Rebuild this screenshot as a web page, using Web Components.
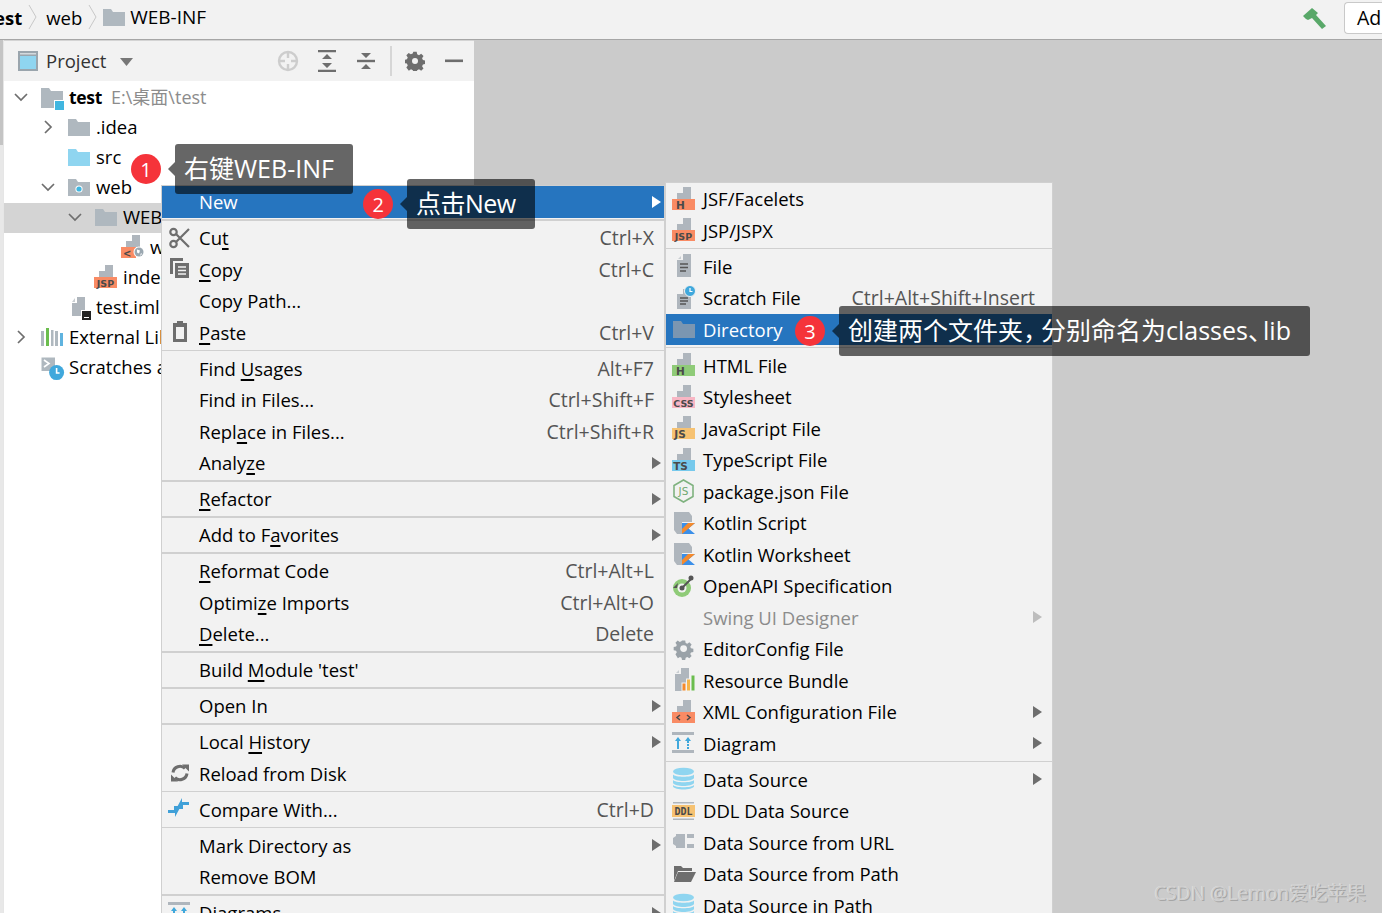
<!DOCTYPE html>
<html>
<head>
<meta charset="utf-8">
<style>
  html, body { margin: 0; height: 100%; overflow: hidden; background: #cbcbcb; }
  body { font-family: "Open Sans", "Noto Sans CJK SC", sans-serif; font-size: 18.5px; color: #000; }
</style>
</head>
<body>
<ide-window>
  <ide-breadcrumbs slot="top"></ide-breadcrumbs>
  <project-panel slot="left">
    <tree-row level="0" arrow="down" icon="root"><b>test</b><span class="path">E:\桌面\test</span></tree-row>
    <tree-row level="1" arrow="right" icon="folder">.idea</tree-row>
    <tree-row level="1" icon="src">src</tree-row>
    <tree-row level="1" arrow="down" icon="web">web</tree-row>
    <tree-row level="2" arrow="down" icon="folder" selected>WEB-INF</tree-row>
    <tree-row level="3" icon="webxml">web.xml</tree-row>
    <tree-row level="2" icon="jsp">index.jsp</tree-row>
    <tree-row level="1" icon="iml">test.iml</tree-row>
    <tree-row level="0" arrow="right" icon="libs">External Libraries</tree-row>
    <tree-row level="0" icon="scratches">Scratches and Consoles</tree-row>
  </project-panel>
</ide-window>

<context-menu style="left:161px;top:185px;width:504px" end="3">
  <menu-row selected arrow>New</menu-row>
  <menu-sep thick></menu-sep>
  <menu-row icon="cut" shortcut="Ctrl+X">Cu<u>t</u></menu-row>
  <menu-row icon="copy" shortcut="Ctrl+C"><u>C</u>opy</menu-row>
  <menu-row>Copy Path...</menu-row>
  <menu-row icon="paste" shortcut="Ctrl+V"><u>P</u>aste</menu-row>
  <menu-sep></menu-sep>
  <menu-row shortcut="Alt+F7">Find <u>U</u>sages</menu-row>
  <menu-row shortcut="Ctrl+Shift+F">Find in Files...</menu-row>
  <menu-row shortcut="Ctrl+Shift+R">Repl<u>a</u>ce in Files...</menu-row>
  <menu-row arrow>Analy<u>z</u>e</menu-row>
  <menu-sep thick></menu-sep>
  <menu-row arrow><u>R</u>efactor</menu-row>
  <menu-sep thick></menu-sep>
  <menu-row arrow>Add to F<u>a</u>vorites</menu-row>
  <menu-sep thick></menu-sep>
  <menu-row shortcut="Ctrl+Alt+L"><u>R</u>eformat Code</menu-row>
  <menu-row shortcut="Ctrl+Alt+O">Optimi<u>z</u>e Imports</menu-row>
  <menu-row shortcut="Delete"><u>D</u>elete...</menu-row>
  <menu-sep thick></menu-sep>
  <menu-row>Build <u>M</u>odule 'test'</menu-row>
  <menu-sep thick></menu-sep>
  <menu-row arrow>Open In</menu-row>
  <menu-sep thick></menu-sep>
  <menu-row arrow>Local <u>H</u>istory</menu-row>
  <menu-row icon="reload">Reload from Disk</menu-row>
  <menu-sep></menu-sep>
  <menu-row icon="compare" shortcut="Ctrl+D">Compare With...</menu-row>
  <menu-sep></menu-sep>
  <menu-row arrow>Mark Directory as</menu-row>
  <menu-row>Remove BOM</menu-row>
  <menu-sep thick></menu-sep>
  <menu-row icon="diagram" arrow>Diagrams</menu-row>
</context-menu>

<context-menu style="left:665px;top:182px;width:388px" end="10">
  <menu-row icon="jsf">JSF/Facelets</menu-row>
  <menu-row icon="jsp">JSP/JSPX</menu-row>
  <menu-sep></menu-sep>
  <menu-row icon="file">File</menu-row>
  <menu-row icon="scratch" shortcut="Ctrl+Alt+Shift+Insert">Scratch File</menu-row>
  <menu-row icon="dirsel" selected>Directory</menu-row>
  <menu-sep></menu-sep>
  <menu-row icon="html">HTML File</menu-row>
  <menu-row icon="css">Stylesheet</menu-row>
  <menu-row icon="js">JavaScript File</menu-row>
  <menu-row icon="ts">TypeScript File</menu-row>
  <menu-row icon="node">package.json File</menu-row>
  <menu-row icon="kotlin">Kotlin Script</menu-row>
  <menu-row icon="kotlin">Kotlin Worksheet</menu-row>
  <menu-row icon="openapi">OpenAPI Specification</menu-row>
  <menu-row disabled arrow>Swing UI Designer</menu-row>
  <menu-row icon="gear">EditorConfig File</menu-row>
  <menu-row icon="bundle">Resource Bundle</menu-row>
  <menu-row icon="xml" arrow>XML Configuration File</menu-row>
  <menu-row icon="diagram" arrow>Diagram</menu-row>
  <menu-sep></menu-sep>
  <menu-row icon="db" arrow>Data Source</menu-row>
  <menu-row icon="ddl">DDL Data Source</menu-row>
  <menu-row icon="plug">Data Source from URL</menu-row>
  <menu-row icon="open">Data Source from Path</menu-row>
  <menu-row icon="db">Data Source in Path</menu-row>
</context-menu>

<step-callout num="1" style="left:131px;top:144px">右键WEB-INF</step-callout>
<step-callout num="2" style="left:363px;top:179px;letter-spacing:-.5px">点击New</step-callout>
<step-callout num="3" style="left:795px;top:306px">创建两个文件夹<span class="comma">，</span>分别命名为classes<span class="dun">、</span>lib</step-callout>

<water-mark>CSDN @Lemon爱吃苹果</water-mark>

<script>
// small svg helpers, everything drawn on a 24x24 box
const page = '<path d="M11 0H19V12H5V6H11Z" fill="#afb6bd"/>';
const badge = (color, label, size) => page +
  `<rect x="0" y="12" width="23" height="11" fill="${color}"/>` +
  `<text x="${label.length > 1 ? 11.5 : 4}" y="21.5" text-anchor="${label.length > 1 ? 'middle' : 'start'}" font-family="DejaVu Sans" font-weight="700" font-size="${size || 10.5}" fill="#4a4a4a">${label}</text>`;
const folder = (color, extra) =>
  `<path d="M1 4H9L11 7H23V21H1Z" fill="${color}"/>` + (extra || '');
const gearPath = '<path fill="#9aa2a8" d="M10 2h4l.6 3 2 .9 2.6-1.700 2.800 2.800-1.700 2.600.9 2 3 .6v4l-3 .6-.9 2 1.700 2.600-2.800 2.800-2.600-1.700-2 .9-.6 3h-4l-.6-3-2-.9-2.600 1.700L1.800 19.200l1.700-2.600-.9-2-3-.6v-4l3-.6.9-2L1.800 4.800 4.600 2l2.600 1.700 2-.9Z" transform="translate(2 2) scale(.8)"/><circle cx="11.600" cy="11.600" r="3.400" fill="#f2f2f2"/>';

const ICONS = {
  root: '<path d="M1 3H9L11 6H23V23H1Z" fill="#afb8bf"/><rect x="14" y="15" width="10" height="10" fill="#fff"/><rect x="15" y="16" width="9" height="9" fill="#40b6e0"/>',
  folder: folder('#afb8bf'),
  src: folder('#8fd5f0'),
  web: folder('#afb8bf', '<circle cx="12" cy="14" r="3.600" fill="#fff"/><circle cx="12" cy="14" r="2.600" fill="#40b6e0"/>'),
  dirsel: folder('#7b96b1'),
  webxml: page + '<rect x="0" y="12" width="15" height="11" fill="#f98b64"/><text x="2" y="21.500" font-family="DejaVu Sans" font-weight="700" font-size="10" fill="#4a4a4a">&lt;</text><circle cx="18" cy="17" r="5.500" fill="#fff"/><circle cx="18" cy="17" r="4.500" fill="#9aa7b0"/><path d="M16 14.500l3 1-1 3-2-1ZM20 18l1 1-2 2Z" fill="#fff"/>',
  jsp: badge('#f98b64', 'JSP', 9.500),
  jsf: badge('#f98b64', 'H'),
  html: badge('#8fcb78', 'H'),
  css: badge('#f8b6c4', 'CSS', 9.500),
  js: badge('#f6c272', 'JS', 10.500).replace('x="11.5"', 'x="8"'),
  ts: badge('#76c9ec', 'TS', 10.500).replace('x="11.5"', 'x="8.500"'),
  xml: page + '<rect x="0" y="12" width="23" height="11" fill="#f98b64"/><path d="M8 15l-3 2.500L8 20M15 15l3 2.500L15 20" fill="none" stroke="#4a4a4a" stroke-width="1.500"/>',
  iml: '<path d="M10 2H18V21H5V8H10Z" fill="#afb6bd"/><path d="M8 3V7H5Z" fill="#c9ced2"/><rect x="14" y="15" width="10" height="10" fill="#fff"/><rect x="15" y="16" width="9" height="9" fill="#222"/><rect x="17" y="22" width="5" height="1" fill="#fff"/>',
  libs: '<path d="M1 6h3v15H1ZM15 6h3v15h-3Z" fill="#afb8bf"/><rect x="6" y="3" width="3" height="18" fill="#6bbd4e"/><rect x="11" y="5" width="2.500" height="16" fill="#afb8bf"/><rect x="20" y="8" width="3" height="13" fill="#5fb3df"/>',
  scratches: '<path d="M1.500 2.500H15V16H1.500Z" fill="#afb8bf"/><path d="M4 5l5 3.500-5 3.500" fill="none" stroke="#fff" stroke-width="1.600"/><circle cx="16.600" cy="17.600" r="7.500" fill="#40a8dc"/><path d="M16.600 13v5h3" fill="none" stroke="#fff" stroke-width="1.600"/>',
  cut: '<g fill="none" stroke="#6e6e6e" stroke-width="2.200"><circle cx="5.500" cy="6" r="3.200"/><circle cx="5.500" cy="18" r="3.200"/><path d="M8 8 21 21M8 16 21 3"/></g>',
  copy: '<path d="M2 1H15V4H5V17H2Z" fill="#6e6e6e"/><path d="M7 6H21V21H7Z" fill="#6e6e6e"/><path d="M10 10H18M10 13.500H18M10 17H18" stroke="#f2f2f2" stroke-width="1.300"/>',
  paste: '<path d="M9 1h6v2h4v19H5V3h4Z" fill="#6e6e6e"/><rect x="8" y="7" width="8" height="12" fill="#f2f2f2"/>',
  reload: '<g fill="none" stroke="#6e6e6e" stroke-width="3"><path d="M5 11.500A7 7 0 0 1 17 7.500"/><path d="M19 12.500A7 7 0 0 1 7 16.500"/></g><path d="M14 3.500h7v7ZM10 20.500H3v-7Z" fill="#6e6e6e"/>',
  compare: '<g fill="#40a0d8"><path d="M0 13H6V9L13 9 7 20V16H0Z"/><path d="M21 8H15V12L8 12 14 1V5H21Z"/></g>',
  file: '<path d="M11 0H19V23H5V6H11Z" fill="#afb6bd"/><path d="M9 2V5H6Z" fill="#c9ced2"/><path d="M8 10H16M8 13.500H16M8 17H14" stroke="#555" stroke-width="1.500"/>',
  scratch: '<path d="M11 3H19V23H5V8H11Z" fill="#afb6bd"/><path d="M8 12H16M8 15H16M8 18H14" stroke="#555" stroke-width="1.500"/><circle cx="18" cy="5" r="5.500" fill="#40a8dc" stroke="#f2f2f2"/><path d="M18 2v3.500h2.500" fill="none" stroke="#fff" stroke-width="1.200"/>',
  node: '<path d="M11.500 1 21 6.500v11L11.500 23 2 17.500v-11Z" fill="none" stroke="#7fb27f" stroke-width="1.600"/><text x="11.500" y="16" text-anchor="middle" font-family="DejaVu Sans" font-size="10.500" fill="#6fa86f">JS</text>',
  kotlin: '<path d="M2 1H17L20 5V11H10V23H5L2 19Z" fill="#afb6bd"/><path d="M10 23V12H23L16.500 17.500 23 23Z" fill="#3b8fe8"/><path d="M10 18 16 12H23L10 23Z" fill="#f58a2c"/>',
  openapi: '<circle cx="10" cy="14" r="9" fill="#8fcb78"/><circle cx="10" cy="14" r="4.500" fill="#f2f2f2"/><path d="M10 14 19 5" stroke="#555" stroke-width="2"/><circle cx="10" cy="14" r="2.500" fill="#555"/><circle cx="19" cy="4" r="2.500" fill="#555"/><path d="M1 14l5-5-1 5Z" fill="#555"/>',
  gear: gearPath,
  bundle: '<path d="M9 0H17V23H3V6H9Z" fill="#afb6bd"/><path d="M7 2V5H4Z" fill="#c9ced2"/><rect x="10" y="15" width="4" height="8" fill="#f58a2c" stroke="#f2f2f2"/><rect x="14.500" y="11" width="4" height="12" fill="#f6b54a" stroke="#f2f2f2"/><rect x="19" y="7" width="4" height="16" fill="#6bbd4e" stroke="#f2f2f2"/>',
  diagram: '<rect x="0" y="1" width="22" height="3" fill="#afb6bd"/><rect x="0" y="19" width="22" height="3" fill="#afb6bd"/><g fill="#40a8dc"><path d="M6 6l3 4H7v8H5v-8H3Z"/><path d="M16 6l3 4h-2v2h-2v-2h-2ZM15 13h2v2h-2ZM15 16h2v2h-2Z"/></g>',
  db: '<g fill="#8fd5f0"><ellipse cx="11.500" cy="4.500" rx="10.500" ry="3.800"/><path d="M1 7.500c2 3 19 3 21 0v3.500c-2 4-19 4-21 0Z"/><path d="M1 13c2 3 19 3 21 0v3c-2 4-19 4-21 0Z"/><path d="M1 18c2 3 19 3 21 0v1.500c-2 4-19 4-21 0Z"/></g>',
  ddl: '<rect x="1" y="3" width="21" height="1.500" fill="#afb6bd"/><rect x="1" y="19.500" width="21" height="1.500" fill="#afb6bd"/><rect x="0" y="6" width="23" height="12" fill="#f6c272"/><text x="11.500" y="16" text-anchor="middle" font-family="DejaVu Sans Mono" font-weight="700" font-size="10" fill="#4a4a4a">DDL</text>',
  plug: '<path d="M1 8 4 6V4H13V18H4V16L1 14Z" fill="#afb6bd"/><rect x="15" y="4" width="7" height="4" fill="#afb6bd"/><rect x="15" y="14" width="7" height="4" fill="#afb6bd"/>',
  open: '<path d="M2 4H9L11 6H20V9H6L2 19Z" fill="#6e6e6e"/><path d="M6 10H24L19 20H2Z" fill="#6e6e6e"/>'
};

class IconGlyph extends HTMLElement {
  connectedCallback() {
    const root = this.attachShadow({mode: 'open'});
    root.innerHTML = `<style>:host{display:block;width:24px;height:24px;flex:none}svg{display:block;overflow:visible}</style>
      <svg width="24" height="24" viewBox="0 0 24 24">${ICONS[this.getAttribute('name')] || ''}</svg>`;
  }
}

class IdeWindow extends HTMLElement {
  constructor() {
    super();
    this.attachShadow({mode: 'open'}).innerHTML = `<style>
      :host { display: grid; grid-template-rows: 40px 1fr; height: 913px; }
      .body { display: grid; grid-template-columns: 4px 470px 1fr; min-height: 0; }
      .strip { background: linear-gradient(#c4c4c4 0 105px, #e8e8e8 105px); border-right: 1px solid #e6e6e6; box-sizing: border-box; }
    </style>
    <slot name="top"></slot>
    <div class="body"><div class="strip"></div><slot name="left"></slot><div></div></div>`;
  }
}

class IdeBreadcrumbs extends HTMLElement {
  constructor() {
    super();
    const chevron = '<svg class="sep" width="9" height="26" viewBox="0 0 9 26"><path d="M1 1 8 13 1 25" fill="none" stroke="#c8c8c8"/></svg>';
    this.attachShadow({mode: 'open'}).innerHTML = `<style>
      :host { display: flex; align-items: center; background: #f2f2f2; border-bottom: 1px solid #a6a6a6; box-sizing: border-box; height: 40px; overflow: hidden; padding-bottom: 5px; }
      b { margin-left: -14px; }
      .sep { margin: 0 9px 0 6px; }
      icon-glyph { margin: 0 4px 0 -4px; }
      .crumb { font-size: 19px; }
      .space { flex: 1; }
      .hammer { margin: 3px 17px 0 0; }
      button { font: inherit; font-size: 19.5px; background: #fff; border: 1px solid #c9c9c9; border-right: 0; border-radius: 4px 0 0 4px; width: 38px; height: 32px; margin-top: 1px; text-align: left; padding: 0 0 0 12px; color: #000; }
    </style>
    <b>test</b>${chevron}<span>web</span>${chevron}<icon-glyph name="folder"></icon-glyph><span class="crumb">WEB-INF</span>
    <div class="space"></div>
    <svg class="hammer" width="24" height="22" viewBox="0 0 24 22"><path d="M0 8 9 0 15 5 13 7 23 18 19 21 9 10 5 12 3 11Z" fill="#59a869"/></svg>
    <button>Ad</button>`;
  }
}

class ProjectPanel extends HTMLElement {
  constructor() {
    super();
    this.attachShadow({mode: 'open'}).innerHTML = `<style>
      :host { display: block; background: #fff; border-top: 1px solid #d4d4d4; box-sizing: border-box; }
      header { display: flex; align-items: center; height: 40px; background: #f2f2f2; padding-left: 14px; font-size: 18.5px; color: #333; }
      .win { margin-right: 8px; }
      .title { margin-bottom: 2px; }
      .drop { margin: 2px 0 0 14px; }
      .space { flex: 1; }
      .tool { margin-left: 0; width: 39px; display: flex; justify-content: center; }
      .div { width: 2px; height: 30px; background: #d6d6d6; margin: 0 3px 0 5px; }
      .tree { padding-top: 2px; }
    </style>
    <header>
      <svg class="win" width="20" height="20" viewBox="0 0 20 20"><rect width="20" height="20" fill="#9aa5ad"/><rect x="2" y="5" width="16" height="13" fill="#8fd5f0"/><rect x="2" y="2" width="16" height="1.500" fill="#d4dade"/></svg>
      <span class="title">Project</span>
      <svg class="drop" width="13" height="8" viewBox="0 0 13 8"><path d="M0 0H13L6.500 8Z" fill="#777"/></svg>
      <div class="space"></div>
      <div class="tool"><svg width="22" height="22" viewBox="0 0 22 22"><circle cx="11" cy="11" r="9" fill="none" stroke="#cdcdcd" stroke-width="2.400"/><path d="M11 1v7M11 14v7M1 11h7M14 11h7" stroke="#cdcdcd" stroke-width="2.400"/></svg></div>
      <div class="tool"><svg width="18" height="22" viewBox="0 0 18 22"><path d="M0 1h18M0 21h18" stroke="#6e6e6e" stroke-width="2.400"/><path d="M9 4l5 5H4ZM9 18l5-5H4Z" fill="#6e6e6e"/></svg></div>
      <div class="tool"><svg width="18" height="22" viewBox="0 0 18 22"><path d="M0 11h18" stroke="#6e6e6e" stroke-width="2.400"/><path d="M4 3h10L9 8ZM4 19h10l-5-5Z" fill="#6e6e6e"/></svg></div>
      <div class="div"></div>
      <div class="tool"><svg width="20" height="20" viewBox="0 0 24 24"><path fill="#6e6e6e" d="M10 1h4l.6 3 2.200 1 2.600-1.700 2.800 2.800-1.700 2.600 1 2.200 3 .6v4l-3 .6-1 2.200 1.700 2.600-2.800 2.800-2.600-1.700-2.200 1-.6 3h-4l-.6-3-2.200-1-2.600 1.700L1.600 19.900l1.700-2.600-1-2.200-3-.6v-4l3-.6 1-2.200L1.600 5.100 4.400 2.300 7 4l2.200-1Z"/><circle cx="12" cy="12" r="3.600" fill="#f2f2f2"/></svg></div>
      <div class="tool" style="margin-right:1px"><svg width="18" height="4" viewBox="0 0 18 4"><rect y="0.500" width="18" height="2.600" fill="#6e6e6e"/></svg></div>
    </header>
    <div class="tree"><slot></slot></div>`;
  }
}

class TreeRow extends HTMLElement {
  constructor() {
    super();
    const level = +this.getAttribute('level') || 0;
    const arrow = this.getAttribute('arrow');
    const d = arrow === 'down' ? 'M2 5 8 11 14 5' : 'M5 2 11 8 5 14';
    const chevron = arrow ? `<svg class="chev" width="16" height="16" viewBox="0 0 16 16"><path d="${d}" fill="none" stroke="#6e6e6e" stroke-width="1.700"/></svg>` : '<span class="chev"></span>';
    this.attachShadow({mode: 'open'}).innerHTML = `<style>
      :host { display: flex; align-items: center; height: 30px; white-space: nowrap; box-sizing: border-box; padding-left: ${9 + 27 * level}px; }
      :host([selected]) { background: #d4d4d4; }
      .chev { width: 16px; height: 16px; flex: none; margin: 0 11px 2px 0; }
      icon-glyph { margin: 0 5px 2px 0; }
      .label { margin-bottom: 4px; }
      ::slotted(b) { font-weight: 700; font-size: 17.500px; letter-spacing: -.3px; }
      ::slotted(.path) { color: #8c8c8c; margin-left: 9px; font-size: 18px; }
    </style>${chevron}<icon-glyph name="${this.getAttribute('icon')}"></icon-glyph><span class="label"><slot></slot></span>`;
  }
}

class ContextMenu extends HTMLElement {
  constructor() {
    super();
    this.attachShadow({mode: 'open'}).innerHTML = `<style>
      :host { display: block; position: absolute; box-sizing: border-box; background: #f2f2f2; border: 1px solid #d0d0d0; border-bottom: 0; --end: ${this.getAttribute('end')}px; }
    </style><slot></slot>`;
  }
}

class MenuRow extends HTMLElement {
  constructor() {
    super();
    const icon = this.getAttribute('icon');
    const shortcut = this.getAttribute('shortcut');
    this.attachShadow({mode: 'open'}).innerHTML = `<style>
      :host { display: flex; align-items: center; height: 31.5px; padding: 0 var(--end) 0 6px; white-space: nowrap; }
      :host([selected]) { background: #2675bf; color: #fff; }
      :host([disabled]) { color: #8c8c8c; }
      .ico { width: 24px; height: 24px; flex: none; margin-right: 7px; }
      .space { flex: 1; }
      .short { color: #555; margin-right: 7px; font-size: 19.5px; }
      .tri { flex: none; }
      ::slotted(u) { text-decoration-thickness: 1.500px; text-underline-offset: 3px; }
    </style>
    ${icon ? `<icon-glyph class="ico" name="${icon}"></icon-glyph>` : '<span class="ico"></span>'}
    <span class="label"><slot></slot></span><div class="space"></div>
    ${shortcut ? `<span class="short">${shortcut}</span>` : ''}
    ${this.hasAttribute('arrow') ? `<svg class="tri" width="9" height="12" viewBox="0 0 9 12"><path d="M0 0 9 6 0 12Z" fill="${this.hasAttribute('disabled') ? '#bdbdbd' : this.hasAttribute('selected') ? '#fff' : '#6e6e6e'}"/></svg>` : ''}`;
  }
}

class MenuSep extends HTMLElement {
  constructor() {
    super();
    this.attachShadow({mode: 'open'}).innerHTML = `<style>
      :host { display: flex; align-items: center; height: 4.500px; }
      div { flex: 1; height: 1px; background: #d0d0d0; }
      :host([thick]) div { height: 2px; }
    </style><div></div>`;
  }
}

class StepCallout extends HTMLElement {
  constructor() {
    super();
    this.attachShadow({mode: 'open'}).innerHTML = `<style>
      :host { position: absolute; display: flex; align-items: center; color: #fff; height: 50px; white-space: nowrap; }
      .num { width: 30px; height: 30px; border-radius: 50%; background: #f5333a; display: flex; align-items: center; justify-content: center; font-size: 20px; margin-right: 7px; }
      .tip { width: 0; height: 0; border: 7px solid transparent; border-left: 0; border-right-color: rgba(0,0,0,.6); }
      .box { background: rgba(0,0,0,.6); height: 50px; box-sizing: border-box; display: flex; align-items: center; padding: 0 19px 5px 9px; border-radius: 3px; font-size: 25px; }
      .text { display: block; }
      ::slotted(.comma) { margin-right: -7px; }
      ::slotted(.dun) { margin-right: -10px; }
    </style><div class="num">${this.getAttribute('num')}</div><div class="tip"></div><div class="box"><span class="text"><slot></slot></span></div>`;
  }
}

class WaterMark extends HTMLElement {
  constructor() {
    super();
    this.attachShadow({mode: 'open'}).innerHTML = `<style>
      :host { position: absolute; right: 16px; bottom: 7px; color: #cfcfcf; font-size: 19.2px; line-height: 26px; text-shadow: 1px 1px 0 #a5a5a5, -.5px -.5px 0 #e6e6e6; }
    </style><slot></slot>`;
  }
}

customElements.define('icon-glyph', IconGlyph);
customElements.define('ide-window', IdeWindow);
customElements.define('ide-breadcrumbs', IdeBreadcrumbs);
customElements.define('project-panel', ProjectPanel);
customElements.define('tree-row', TreeRow);
customElements.define('context-menu', ContextMenu);
customElements.define('menu-row', MenuRow);
customElements.define('menu-sep', MenuSep);
customElements.define('step-callout', StepCallout);
customElements.define('water-mark', WaterMark);
</script>
</body>
</html>
